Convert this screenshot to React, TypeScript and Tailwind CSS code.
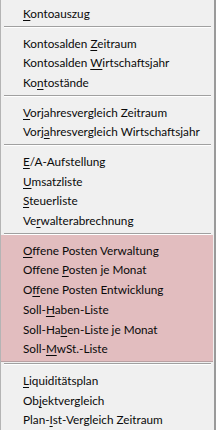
import React from "react";

type Item = { label: string; u: number };

// u = index of the underlined (mnemonic) character
const groups: { items: Item[]; marked?: boolean }[] = [
  { items: [{ label: "Kontoauszug", u: 0 }] },
  {
    items: [
      { label: "Kontosalden Zeitraum", u: 12 },
      { label: "Kontosalden Wirtschaftsjahr", u: 12 },
      { label: "Kontostände", u: 2 },
    ],
  },
  {
    items: [
      { label: "Vorjahresvergleich Zeitraum", u: 0 },
      { label: "Vorjahresvergleich Wirtschaftsjahr", u: 4 },
    ],
  },
  {
    items: [
      { label: "E/A-Aufstellung", u: 0 },
      { label: "Umsatzliste", u: 0 },
      { label: "Steuerliste", u: 0 },
      { label: "Verwalterabrechnung", u: 2 },
    ],
  },
  {
    marked: true,
    items: [
      { label: "Offene Posten Verwaltung", u: 0 },
      { label: "Offene Posten je Monat", u: 7 },
      { label: "Offene Posten Entwicklung", u: 1 },
      { label: "Soll-Haben-Liste", u: 5 },
      { label: "Soll-Haben-Liste je Monat", u: 7 },
      { label: "Soll-MwSt.-Liste", u: 5 },
    ],
  },
  {
    items: [
      { label: "Liquiditätsplan", u: 0 },
      { label: "Objektvergleich", u: 2 },
      { label: "Plan-Ist-Vergleich Zeitraum", u: 5 },
    ],
  },
];

function MenuItem({ label, u }: Item) {
  return (
    <div className="h-[19.75px] pl-[22px] leading-[19.75px] whitespace-nowrap">
      {label.slice(0, u)}
      <span className="underline underline-offset-[2px]">{label[u]}</span>
      {label.slice(u + 1)}
    </div>
  );
}

function Separator() {
  return (
    <div className="mx-[3px] flex flex-col">
      <div className="h-px bg-[#a0a0a0]" />
      <div className="h-px bg-white" />
    </div>
  );
}

export default function App() {
  return (
    <div
      className="h-[430px] w-[216px] overflow-hidden border-l border-r-2 border-l-[#b4b4b4] border-r-[#9a9a9a] bg-[#f0f0f0] pt-[4.2px] text-[11.75px] text-[#0a0a0a]"
      style={{ fontFamily: 'Lato, "Noto Sans", sans-serif' }}
    >
      {groups.map((g, gi) => (
        <div key={gi}>
          {gi > 0 && (
            <div className="pt-[2.1px]">
              <Separator />
            </div>
          )}
          <div
            className={
              g.marked
                ? "mr-[1px] bg-[#e2bdbf] pt-[5.65px] pb-[2.1px] shadow-[0_1px_0_#b9a0a2]"
                : gi > 0
                  ? "pt-[5.65px]"
                  : ""
            }
          >
            {g.items.map((it) => (
              <MenuItem key={it.label} label={it.label} u={it.u} />
            ))}
          </div>
        </div>
      ))}
    </div>
  );
}
